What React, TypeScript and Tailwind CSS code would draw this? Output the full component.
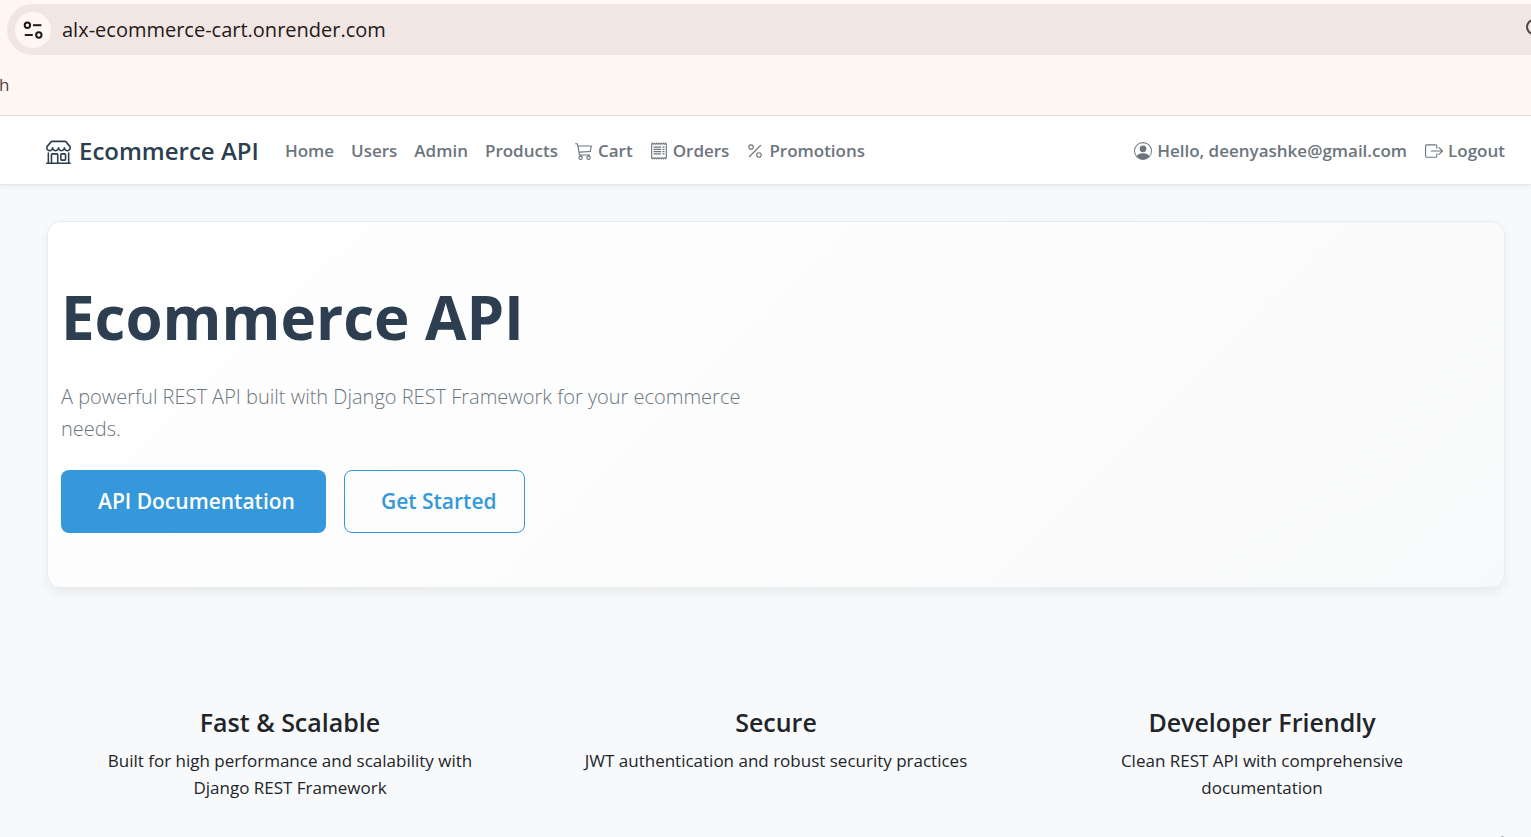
import type { ReactNode } from "react";
import {
  BsShop,
  BsCart3,
  BsReceipt,
  BsPercent,
  BsPersonCircle,
  BsBoxArrowRight,
} from "react-icons/bs";

type NavItem = { label: string; icon?: ReactNode };

const links: NavItem[] = [
  { label: "Home" },
  { label: "Users" },
  { label: "Admin" },
  { label: "Products" },
  { label: "Cart", icon: <BsCart3 /> },
  { label: "Orders", icon: <BsReceipt /> },
  { label: "Promotions", icon: <BsPercent /> },
];

const account: NavItem[] = [
  { label: "Hello, deenyashke@gmail.com", icon: <BsPersonCircle /> },
  { label: "Logout", icon: <BsBoxArrowRight /> },
];

const features = [
  {
    title: "Fast & Scalable",
    text: "Built for high performance and scalability with Django REST Framework",
  },
  {
    title: "Secure",
    text: "JWT authentication and robust security practices",
  },
  {
    title: "Developer Friendly",
    text: "Clean REST API with comprehensive documentation",
  },
];

function BrowserBar() {
  return (
    <div className="overflow-hidden border-b border-[#ebdcd6] bg-[#fff7f4] pt-1">
      <div className="-mr-4 ml-[7px] flex h-[51px] items-center rounded-l-full bg-[#f2e6e4] pl-2">
        <button
          type="button"
          aria-label="Site information"
          className="flex size-9 shrink-0 items-center justify-center rounded-full bg-[#fff7f4] text-[#231a18]"
        >
          <svg
            viewBox="0 0 20 20"
            className="size-5"
            fill="none"
            stroke="currentColor"
            strokeWidth="2"
            aria-hidden="true"
          >
            <circle cx="4.4" cy="5.2" r="2.7" />
            <path d="M10 5.2h8.4" />
            <path d="M1.8 15h8" />
            <circle cx="15.8" cy="15" r="2.7" />
          </svg>
        </button>
        <input
          type="text"
          aria-label="Address"
          defaultValue="alx-ecommerce-cart.onrender.com"
          className="ml-[11px] min-w-0 flex-1 bg-transparent text-[20px] text-[#231a18] outline-none"
        />
        <button
          type="button"
          aria-label="Search page"
          className="shrink-0 text-[#4f4440]"
        >
          <svg
            viewBox="0 0 22 22"
            className="size-[22px]"
            fill="none"
            stroke="currentColor"
            strokeWidth="2"
            aria-hidden="true"
          >
            <circle cx="9" cy="8" r="7" />
            <path d="m14 13 6 6" />
          </svg>
        </button>
      </div>
      <div className="flex h-[60px] items-center text-[17px] text-[#53433f]">
        <span className="-ml-px">h</span>
      </div>
    </div>
  );
}

function NavLink({ item }: { item: NavItem }) {
  return (
    <a
      href="#"
      className="flex items-center gap-[5px] whitespace-nowrap text-[17px] font-semibold text-[#6c757d]"
    >
      {item.icon && <span className="text-[18px]">{item.icon}</span>}
      {item.label}
    </a>
  );
}

function NavBar() {
  return (
    <nav className="relative flex h-[69px] items-center border-b border-[#e5e8ec] bg-white pt-[2px] pr-[26px] pl-[46px] shadow-[0_2px_5px_rgba(0,0,0,0.05)]">
      <a
        href="#"
        className="mr-[26px] flex items-center gap-2 whitespace-nowrap text-[24px] font-semibold text-[#2c3e50]"
      >
        <BsShop className="size-[25px]" />
        Ecommerce API
      </a>
      <div className="flex flex-1 items-center gap-[17px]">
        {links.map((item) => (
          <NavLink key={item.label} item={item} />
        ))}
      </div>
      <div className="flex items-center gap-[18px]">
        {account.map((item) => (
          <NavLink key={item.label} item={item} />
        ))}
      </div>
    </nav>
  );
}

function Hero() {
  return (
    <section className="rounded-[14px] border border-[#e9ecef] bg-linear-135 from-white to-[#f8f9fa] px-[13px] pt-[55px] pb-[54px] shadow-[0_5px_11px_rgba(0,0,0,0.06)]">
      <div className="w-1/2">
        <h1 className="text-[60px] leading-[80px] font-bold text-[#2c3e50]">
          Ecommerce API
        </h1>
        <p className="mt-6 max-w-[700px] text-[20px] leading-8 font-light text-[#6c757d]">
          A powerful REST API built with Django REST Framework for your
          ecommerce needs.
        </p>
        <div className="mt-[25px] flex gap-[18px] text-[21px] font-semibold">
          <a
            href="#"
            className="flex h-[63px] items-center rounded-lg bg-[#3498db] pr-[31px] pl-[37px] text-white"
          >
            API Documentation
          </a>
          <a
            href="#"
            className="flex h-[63px] items-center rounded-lg border border-[#3498db] pr-[27px] pl-9 text-[#3498db]"
          >
            Get Started
          </a>
        </div>
      </div>
    </section>
  );
}

function Features() {
  return (
    <section className="mt-[114px] grid grid-cols-3 text-center text-[#212529]">
      {features.map((feature) => (
        <div key={feature.title} className="px-11">
          <h2 className="text-[25px] leading-10 font-semibold">
            {feature.title}
          </h2>
          <p className="mt-[5px] text-[17px] leading-[27px]">{feature.text}</p>
        </div>
      ))}
    </section>
  );
}

function Watermark() {
  return (
    <div className="absolute right-0 bottom-0 h-[5px] w-[203px] overflow-hidden whitespace-nowrap text-[28px] leading-[28px] text-[#a9abad]">
      Activate Windows
    </div>
  );
}

export default function App() {
  return (
    <div className="relative flex h-screen flex-col overflow-hidden bg-[#f8f9fb] font-['Open_Sans','Noto_Sans',sans-serif]">
      <BrowserBar />
      <NavBar />
      <main className="pt-9 pr-[26px] pl-[47px]">
        <Hero />
        <Features />
      </main>
      <Watermark />
    </div>
  );
}
